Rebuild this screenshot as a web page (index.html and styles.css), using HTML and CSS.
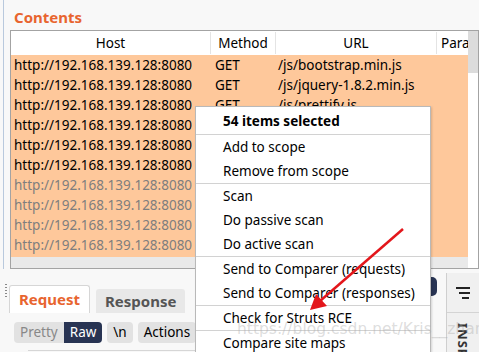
FILE: index.html
```html
<html>
<head>
<link rel="stylesheet" href="styles.css">
</head>
<body>
<div class="screen">
	<div class="top">
		<div class="title">Contents</div>
		<div class="table">
			<div class="grid">
				<div class="head">
					<div class="c-host">Host</div>
					<div class="c-method">Method</div>
					<div class="c-url">URL</div>
					<div class="c-para">Params</div>
				</div>
				<div class="rows">
					<div class="row"><div class="c-host">http://192.168.139.128:8080</div><div class="c-method">GET</div><div class="c-url">/js/bootstrap.min.js</div></div>
					<div class="row"><div class="c-host">http://192.168.139.128:8080</div><div class="c-method">GET</div><div class="c-url">/js/jquery-1.8.2.min.js</div></div>
					<div class="row"><div class="c-host">http://192.168.139.128:8080</div><div class="c-method">GET</div><div class="c-url">/js/prettify.js</div></div>
					<div class="row"><div class="c-host">http://192.168.139.128:8080</div><div class="c-method">GET</div><div class="c-url">/css/style.css</div></div>
					<div class="row"><div class="c-host">http://192.168.139.128:8080</div><div class="c-method">GET</div><div class="c-url">/index.action</div></div>
					<div class="row"><div class="c-host">http://192.168.139.128:8080</div><div class="c-method">GET</div><div class="c-url">/</div></div>
					<div class="row out"><div class="c-host">http://192.168.139.128:8080</div><div class="c-method">GET</div><div class="c-url">/img/logo.png</div></div>
					<div class="row out"><div class="c-host">http://192.168.139.128:8080</div><div class="c-method">GET</div><div class="c-url">/img/bg.png</div></div>
					<div class="row out"><div class="c-host">http://192.168.139.128:8080</div><div class="c-method">GET</div><div class="c-url">/favicon.ico</div></div>
					<div class="row out"><div class="c-host">http://192.168.139.128:8080</div><div class="c-method">GET</div><div class="c-url">/js/app.js</div></div>
					<div class="row out"><div class="c-host">http://192.168.139.128:8080</div><div class="c-method">GET</div><div class="c-url">/js/main.js</div></div>
				</div>
				<div class="hscroll"></div>
			</div>
			<div class="vscroll"><div class="thumb"></div></div>
		</div>
	</div>
	<div class="bottom">
		<div class="left">
			<div class="tabs">
				<div class="grip"></div>
				<div class="tab active">Request</div>
				<div class="tab">Response</div>
			</div>
			<div class="tools">
				<span class="btn pretty">Pretty</span><span class="btn raw">Raw</span>
				<span class="btn">\n</span>
				<span class="btn">Actions</span>
			</div>
			<div class="editor"></div>
		</div>
		<div class="pill-col"><div class="pill"></div></div>
		<div class="side">
			<div class="side-icon">
				<svg width="16" height="14" viewBox="0 0 16 14">
					<rect x="1" y="1" width="14" height="2" fill="#222"/>
					<rect x="4" y="6" width="11" height="2" fill="#222"/>
					<rect x="7" y="11" width="7" height="2" fill="#222"/>
				</svg>
			</div>
			<div class="side-label">INSPECTOR</div>
		</div>
	</div>

	<div class="menu">
		<div class="item bold first">54 items selected</div>
		<div class="sep"></div>
		<div class="item">Add to scope</div>
		<div class="item">Remove from scope</div>
		<div class="sep"></div>
		<div class="item">Scan</div>
		<div class="item">Do passive scan</div>
		<div class="item">Do active scan</div>
		<div class="sep"></div>
		<div class="item">Send to Comparer (requests)</div>
		<div class="item">Send to Comparer (responses)</div>
		<div class="sep"></div>
		<div class="item">Check for Struts RCE</div>
		<div class="sep"></div>
		<div class="item">Compare site maps</div>
	</div>

	<svg class="arrow" width="479" height="352" viewBox="0 0 479 352">
		<line x1="403" y1="229" x2="320" y2="301" stroke="#e3161b" stroke-width="2.5"/>
		<polygon points="310,310 316,294 327,306" fill="#e3161b"/>
	</svg>
	<div class="watermark">https://blog.csdn.net/Kris__zhang</div>
</div>
</body>
</html>
```

FILE: styles.css
```css
	body {
		margin: 0;
		background: #f8f8f8;
		font-family: 'Noto Sans', sans-serif;
		font-size: 13.5px;
		color: #000;
	}
	.screen {
		position: relative;
		width: 479px;
		height: 352px;
		overflow: hidden;
	}
	.top {
		margin-left: 3px;
		border-left: 1px solid #b9c9dd;
		padding-left: 6px;
		height: 269px;
	}
	.title {
		height: 30px;
		line-height: 34px;
		padding-left: 4px;
		font-size: 15px;
		font-weight: bold;
		color: #e8652f;
	}
	.table {
		display: flex;
		width: 467px;
		height: 237px;
		border: 1px solid #a3a3a3;
		background: #fff;
	}
	.grid {
		width: 457px;
		display: flex;
		flex-direction: column;
		overflow: hidden;
	}
	.head, .row {
		display: flex;
		white-space: nowrap;
	}
	.head {
		height: 24px;
		flex-shrink: 0;
	}
	.head div {
		text-align: center;
		border-right: 1px solid #e4e4e4;
		margin: 1px 0;
		line-height: 22px;
	}
	.c-host { width: 199px; flex-shrink: 0; }
	.c-method { width: 64px; flex-shrink: 0; }
	.c-url { width: 160px; flex-shrink: 0; }
	.c-para { width: 80px; flex-shrink: 0; padding-left: 4px; text-align: left !important; }
	.rows {
		flex: 1;
		overflow: hidden;
		background: #fec89b;
	}
	.row {
		height: 20px;
		line-height: 20px;
	}
	.row .c-host { padding-left: 3px; width: 196px; }
	.row .c-method { padding-left: 5px; width: 59px; }
	.row .c-url { padding-left: 4px; width: 156px; }
	.row.out { color: #7e7e7e; }
	.hscroll {
		height: 11px;
		flex-shrink: 0;
		background: #e9e9e9;
	}
	.vscroll {
		width: 10px;
		background: #fff;
	}
	.thumb {
		height: 42px;
		background: #dcdcdc;
	}
	.bottom {
		display: flex;
		height: 83px;
	}
	.left {
		width: 430px;
	}
	.tabs {
		display: flex;
		align-items: flex-end;
		height: 44px;
		padding-left: 9px;
		position: relative;
	}
	.grip {
		position: absolute;
		left: 5px;
		top: 14px;
		width: 2px;
		height: 14px;
		background: radial-gradient(circle, #888 0.8px, transparent 1px) 0 0 / 2px 3px;
	}
	.tab {
		font-weight: bold;
		font-size: 15px;
		color: #555;
		background: #e8e8e8;
		padding: 0 9px;
		height: 24px;
		line-height: 24px;
		margin-right: 6px;
		border-radius: 3px 3px 0 0;
	}
	.tab.active {
		color: #e8652f;
		background: #fff;
		border: 1px solid #d6d6d6;
		border-bottom: none;
		height: 27px;
		line-height: 27px;
	}
	.tools {
		display: flex;
		align-items: center;
		padding-left: 14px;
		padding-top: 8px;
		box-sizing: border-box;
		height: 31px;
	}
	.btn {
		background: #e2e2e2;
		height: 21px;
		line-height: 21px;
		padding: 0 6px;
		border-radius: 4px;
		margin-right: 5px;
	}
	.btn.pretty {
		color: #888;
		border-radius: 4px 0 0 4px;
		margin-right: 0;
	}
	.btn.raw {
		background: #283453;
		color: #fff;
		border-radius: 0 4px 4px 0;
	}
	.editor {
		margin-left: 28px;
		margin-top: 6px;
		border-top: 1px solid #d6d6d6;
	}
	.pill-col {
		width: 17px;
		padding-top: 8px;
	}
	.pill {
		width: 8px;
		height: 19px;
		background: #283453;
		border-radius: 0 5px 5px 0;
	}
	.side {
		margin-top: 4px;
		width: 32px;
		border-left: 1px solid #cfcfcf;
		background: #f0f0f0;
	}
	.side-icon {
		height: 39px;
		display: flex;
		align-items: center;
		justify-content: center;
		border-bottom: 1px solid #d4d4d4;
	}
	.side-label {
		writing-mode: vertical-rl;
		font-weight: bold;
		font-size: 13px;
		color: #333;
		padding-top: 10px;
		padding-left: 7px;
		letter-spacing: 1px;
	}
	.menu {
		position: absolute;
		left: 195px;
		top: 106px;
		width: 234px;
		background: #fff;
		border: 1px solid #b9b9b9;
		box-shadow: 1px 1px 2px rgba(0,0,0,0.15);
	}
	.item {
		height: 24px;
		line-height: 24px;
		padding-left: 27px;
		white-space: nowrap;
	}
	.item.first {
		height: 27px;
		line-height: 29px;
	}
	.bold { font-weight: bold; }
	.sep {
		height: 1px;
		background: #d2d2d2;
	}
	.arrow {
		position: absolute;
		left: 0;
		top: 0;
	}
	.watermark {
		position: absolute;
		left: 237px;
		top: 320px;
		font-family: 'DejaVu Sans', sans-serif;
		font-size: 15.5px;
		color: rgba(170,170,170,0.4);
		white-space: nowrap;
	}
```
